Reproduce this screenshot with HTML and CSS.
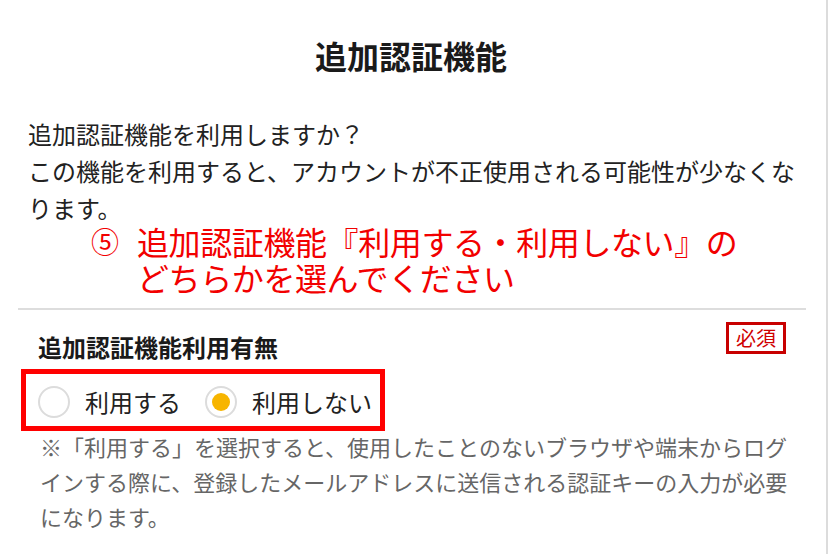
FILE: index.html
```html
<!DOCTYPE html>
<html lang="ja">
<head>
<meta charset="utf-8">
<title>追加認証機能</title>
<link rel="stylesheet" href="styles.css">
</head>
<body>
<div class="page">
  <h1 class="title">追加認証機能</h1>
  <div class="intro">
    <p class="intro-text">追加認証機能を利用しますか？<br>この機能を利用すると、アカウントが不正使用される可能性が少なくなります。</p>
    <div class="annot">
      <span class="annot-num">⑤</span>
      <span class="annot-text">追加認証機能『利用する・利用しない』の<br>どちらかを選んでください</span>
    </div>
  </div>
  <hr class="divider">
  <div class="field">
    <div class="field-head">
      <span class="field-label">追加認証機能利用有無</span>
      <span class="badge">必須</span>
    </div>
    <div class="radio-box">
      <label class="option"><span class="radio"></span><span class="option-text">利用する</span></label>
      <label class="option"><span class="radio checked"></span><span class="option-text">利用しない</span></label>
    </div>
    <p class="note">※「利用する」を選択すると、使用したことのないブラウザや端末からログインする際に、登録したメールアドレスに送信される認証キーの入力が必要になります。</p>
  </div>
</div>
</body>
</html>
```
FILE: styles.css
```css
* { box-sizing: border-box; }
html, body { margin: 0; padding: 0; background: #fff; }
body {
  font-family: "Noto Sans CJK JP", "Noto Sans", sans-serif;
  color: #222;
}
.page {
  width: 828px;
  height: 554px;
  border-right: 2px solid #dcdcdc;
  overflow: hidden;
}
.title {
  margin: 0;
  height: 110px;
  line-height: 110px;
  text-align: center;
  font-size: 32px;
  font-weight: 700;
  color: #1a1a1a;
  padding-right: 4px;
}
.intro {
  padding: 5px 26px 0 28px;
}
.intro-text {
  margin: 0;
  font-size: 24px;
  line-height: 37px;
  color: #222;
}
.annot {
  display: flex;
  align-items: flex-start;
  gap: 18px;
  padding-left: 63px;
  margin-top: -3px;
  color: #f20000;
  font-size: 32px;
  line-height: 36px;
}
.annot-num { font-size: 28px; }
.annot-text { letter-spacing: -0.4px; }
.divider {
  margin: 13px 20px 0 18px;
  border: 0;
  height: 2px;
  background: #dddddd;
}
.field {
  padding-top: 12px;
}
.field-head {
  display: flex;
  justify-content: space-between;
  align-items: flex-start;
  padding: 0 40px 0 38px;
}
.field-label {
  margin-top: 7px;
  font-size: 24px;
  font-weight: 700;
  line-height: 36px;
  color: #1a1a1a;
}
.badge {
  display: inline-flex;
  align-items: center;
  justify-content: center;
  width: 60px;
  height: 32px;
  border: 3px solid #c80000;
  color: #d00000;
  font-size: 20px;
  line-height: 1;
}
.radio-box {
  display: flex;
  align-items: center;
  gap: 24px;
  width: 364px;
  height: 62px;
  margin: 4px 0 0 21px;
  padding: 4px 0 0 12px;
  border: 5px solid #ff0000;
}
.option {
  display: flex;
  align-items: center;
  gap: 15px;
}
.radio {
  width: 32px;
  height: 32px;
  border: 2px solid #dcdcdc;
  border-radius: 50%;
  display: flex;
  align-items: center;
  justify-content: center;
}
.radio.checked::after {
  content: "";
  width: 18px;
  height: 18px;
  border-radius: 50%;
  background: #f7b500;
}
.option-text {
  font-size: 24px;
  line-height: 36px;
  color: #222;
}
.note {
  margin: -2px 0 0;
  padding: 0 34px 0 40px;
  font-size: 22px;
  line-height: 35px;
  color: #666;
}
```
